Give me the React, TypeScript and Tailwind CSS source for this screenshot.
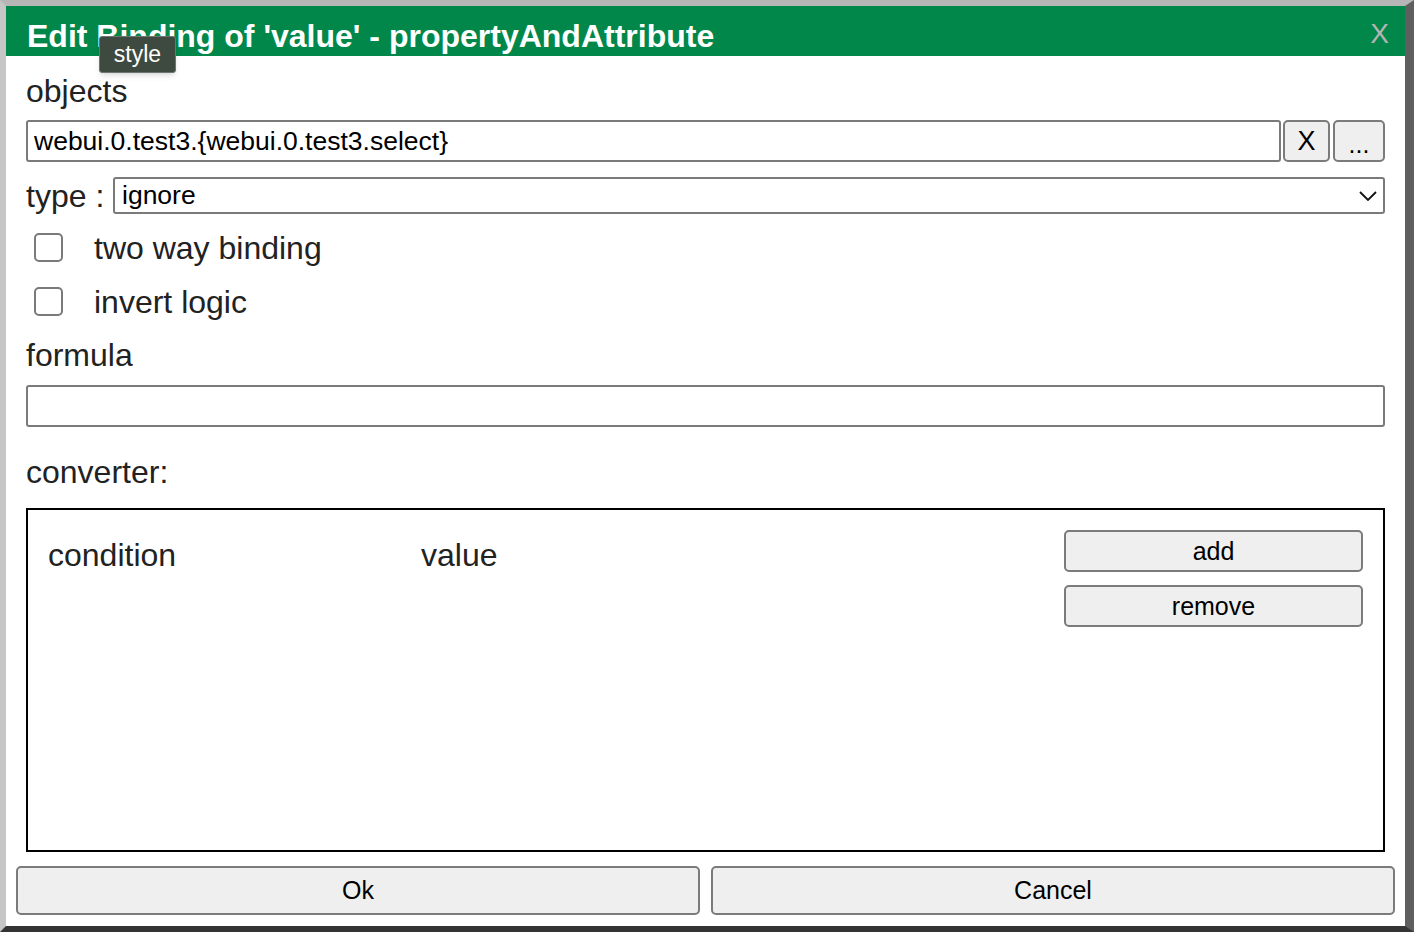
import React from "react";

const font = { fontFamily: '"Liberation Sans", Arial, Helvetica, sans-serif' };

function Checkbox({ label }: { label: string }) {
  return (
    <div className="flex items-center h-[29px] ml-2">
      <div className="w-[29px] h-[29px] rounded-[5px] border-2 border-[#7a7a7a] bg-white shrink-0" />
      <span className="ml-[31px] text-[32px] leading-none text-[#222]">{label}</span>
    </div>
  );
}

function GrayButton({ children, className }: { children: React.ReactNode; className: string }) {
  return (
    <button
      className={
        "bg-[#efefef] border-2 border-[#7b7b7b] rounded-[5px] text-black leading-none flex items-center justify-center " +
        className
      }
    >
      {children}
    </button>
  );
}

export default function App() {
  return (
    <div
      className="w-[1414px] h-[932px] border-t-[6px] border-t-[#b6b6b6] border-l-[6px] border-l-[#c6c6c6] border-r-[9px] border-r-[#5f5f5f] border-b-[6px] border-b-[#343434] bg-[#888]"
      style={font}
    >
      <div className="relative w-full h-full bg-white flex flex-col">
        {/* ── Title bar ── */}
        <div className="h-[50px] bg-[#02874a] flex items-center justify-between pl-[21px] pr-[16px] shrink-0">
          <span className="text-white font-bold text-[32px] leading-none pt-[9px]">
            Edit Binding of 'value' - propertyAndAttribute
          </span>
          <span className="text-[#b4b4b4] text-[28px] leading-none pt-[5px]">X</span>
        </div>

        {/* tooltip */}
        <div className="absolute left-[93px] top-[30px] w-[77px] h-[37px] bg-[#3e4a40] border border-[#6e776f] rounded-[3px] shadow-md flex items-center justify-center">
          <span className="text-white text-[23px] leading-none font-medium pb-[1px]">style</span>
        </div>

        <div className="px-5 flex flex-col">
          <div className="mt-[17px] h-[36px] leading-[36px] text-[32px] text-[#222]">objects</div>

          <div className="mt-[11px] flex h-[42px]">
            <div className="flex-1 border-2 border-[#7a7a7a] rounded-[3px] flex items-center px-[6px] text-[26.5px] text-black leading-none">
              webui.0.test3.{"{"}webui.0.test3.select{"}"}
            </div>
            <GrayButton className="ml-[2px] w-[47px] h-[42px] text-[27px]">X</GrayButton>
            <GrayButton className="ml-[3px] w-[52px] h-[42px] text-[25px] pt-[6px]">...</GrayButton>
          </div>

          <div className="mt-[15px] flex items-center h-[37px]">
            <span className="w-[87px] text-[32px] text-[#222] leading-none">type :</span>
            <div className="flex-1 h-[37px] border-2 border-[#7a7a7a] rounded-[3px] flex items-center justify-between pl-[7px] pr-[6px]">
              <span className="text-[26.5px] text-black leading-none">ignore</span>
              <svg width="18" height="10" viewBox="0 0 18 10" fill="none">
                <polyline points="1,1 9,9 17,1" stroke="#111" strokeWidth="1.8" />
              </svg>
            </div>
          </div>

          <div className="mt-[19px]">
            <Checkbox label="two way binding" />
          </div>
          <div className="mt-[25px]">
            <Checkbox label="invert logic" />
          </div>

          <div className="mt-[21px] h-[36px] leading-[36px] text-[32px] text-[#222]">formula</div>
          <div className="mt-[12px] h-[42px] border-2 border-[#7a7a7a] rounded-[3px]" />

          <div className="mt-[27px] h-[36px] leading-[36px] text-[32px] text-[#222]">converter:</div>

          {/* ── Converter table ── */}
          <div className="mt-[18px] h-[344px] border-2 border-black flex pl-[20px] pr-[20px] pt-[20px]">
            <div className="flex flex-1 pt-[9px]">
              <span className="w-[373px] text-[32px] text-[#222] leading-none">condition</span>
              <span className="text-[32px] text-[#222] leading-none">value</span>
            </div>
            <div className="flex flex-col gap-[13px]">
              <GrayButton className="w-[299px] h-[42px] text-[25px]">add</GrayButton>
              <GrayButton className="w-[299px] h-[42px] text-[25px]">remove</GrayButton>
            </div>
          </div>
        </div>

        {/* ── Footer ── */}
        <div className="mt-[14px] px-[10px] flex gap-[11px]">
          <GrayButton className="flex-1 h-[49px] text-[25px]">Ok</GrayButton>
          <GrayButton className="flex-1 h-[49px] text-[25px]">Cancel</GrayButton>
        </div>
      </div>
    </div>
  );
}
